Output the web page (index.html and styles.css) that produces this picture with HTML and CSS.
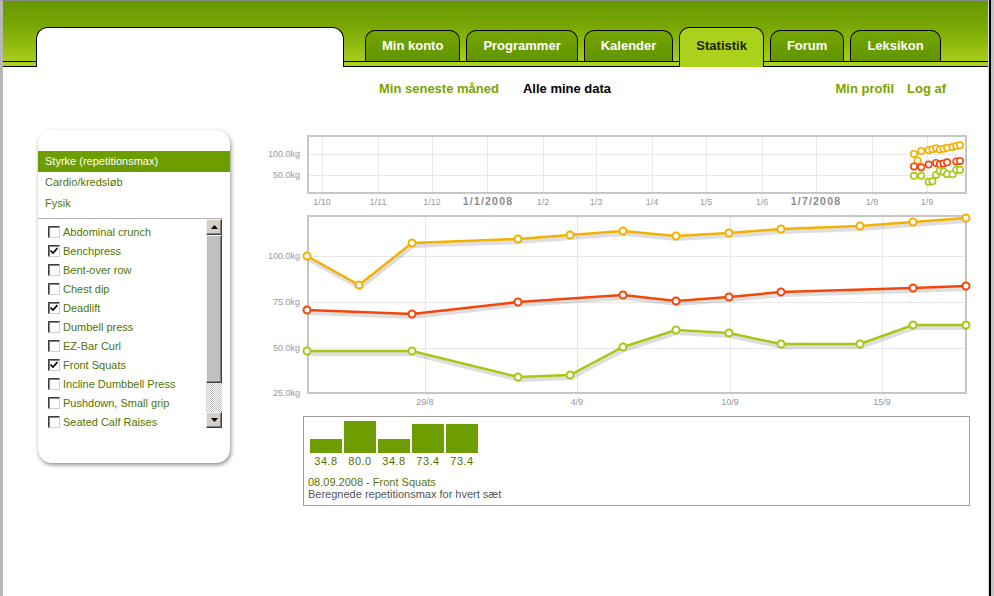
FILE: index.html
```html
<!DOCTYPE html>
<html lang="da">
<head>
  <meta charset="UTF-8" />
  <title>Statistik - Alle mine data</title>
  <link rel="stylesheet" href="styles.css">
</head>
<body>

<div class="frame">
  <div class="window">

    <div class="header">
      <div class="brand"></div>
      <ul class="tabs">
        <li>Min konto</li>
        <li>Programmer</li>
        <li>Kalender</li>
        <li class="active">Statistik</li>
        <li>Forum</li>
        <li>Leksikon</li>
      </ul>
    </div>

    <div class="subnav">
      <a href="#">Min seneste måned</a>
      <span class="current">Alle mine data</span>
      <div class="account">
        <a href="#">Min profil</a>
        <a href="#">Log af</a>
      </div>
    </div>

    <div class="main">

      <div class="sidebar">
        <ul class="cats">
          <li class="sel">Styrke (repetitionsmax)</li>
          <li>Cardio/kredsløb</li>
          <li>Fysik</li>
        </ul>
        <div class="picker">
          <ul class="exercises">
            <li><span class="cb"></span>Abdominal crunch</li>
            <li><span class="cb on"><svg width="8" height="8" viewBox="0 0 8 8"><path d="M0.5 3.5 L3 6 L7.5 1"/></svg></span>Benchpress</li>
            <li><span class="cb"></span>Bent-over row</li>
            <li><span class="cb"></span>Chest dip</li>
            <li><span class="cb on"><svg width="8" height="8" viewBox="0 0 8 8"><path d="M0.5 3.5 L3 6 L7.5 1"/></svg></span>Deadlift</li>
            <li><span class="cb"></span>Dumbell press</li>
            <li><span class="cb"></span>EZ-Bar Curl</li>
            <li><span class="cb on"><svg width="8" height="8" viewBox="0 0 8 8"><path d="M0.5 3.5 L3 6 L7.5 1"/></svg></span>Front Squats</li>
            <li><span class="cb"></span>Incline Dumbbell Press</li>
            <li><span class="cb"></span>Pushdown, Small grip</li>
            <li><span class="cb"></span>Seated Calf Raises</li>
          </ul>
          <div class="scrollbar">
            <div class="sb-btn"><svg width="7" height="4" viewBox="0 0 7 4"><path d="M3.5 0 L7 4 H0 Z"/></svg></div>
            <div class="sb-thumb"></div>
            <div class="sb-track"></div>
            <div class="sb-btn"><svg width="7" height="4" viewBox="0 0 7 4"><path d="M0 0 H7 L3.5 4 Z"/></svg></div>
          </div>
        </div>
      </div>

      <div class="charts">
        <svg class="plot" width="720" height="280" viewBox="255 130 720 280">
          <!-- oversigt -->
          <g class="grid">
            <line x1="309" y1="154.5" x2="965" y2="154.5"/>
            <line x1="309" y1="175.5" x2="965" y2="175.5"/>
            <line x1="322.5" y1="137" x2="322.5" y2="192"/>
            <line x1="378.5" y1="137" x2="378.5" y2="192"/>
            <line x1="432.5" y1="137" x2="432.5" y2="192"/>
            <line x1="487.5" y1="137" x2="487.5" y2="192"/>
            <line x1="543.5" y1="137" x2="543.5" y2="192"/>
            <line x1="596.5" y1="137" x2="596.5" y2="192"/>
            <line x1="652.5" y1="137" x2="652.5" y2="192"/>
            <line x1="706.5" y1="137" x2="706.5" y2="192"/>
            <line x1="762.5" y1="137" x2="762.5" y2="192"/>
            <line x1="816.5" y1="137" x2="816.5" y2="192"/>
            <line x1="872.5" y1="137" x2="872.5" y2="192"/>
            <line x1="927.5" y1="137" x2="927.5" y2="192"/>
          </g>
          <rect class="box" x="308" y="136" width="658" height="57"/>
          <text class="ylab" x="300" y="157">100.0kg</text>
          <text class="ylab" x="300" y="178">50.0kg</text>
          <g class="xlab">
            <text x="322" y="205">1/10</text>
            <text x="378" y="205">1/11</text>
            <text x="432" y="205">1/12</text>
            <text class="year" x="488" y="205">1/1/2008</text>
            <text x="543" y="205">1/2</text>
            <text x="596" y="205">1/3</text>
            <text x="652" y="205">1/4</text>
            <text x="706" y="205">1/5</text>
            <text x="762" y="205">1/6</text>
            <text class="year" x="816" y="205">1/7/2008</text>
            <text x="872" y="205">1/8</text>
            <text x="927" y="205">1/9</text>
          </g>
          <g class="mini yellow">
            <circle cx="914" cy="154" r="3.2"/><circle cx="917.6" cy="160.7" r="3.2"/><circle cx="921.3" cy="151" r="3.2"/>
            <circle cx="928.7" cy="150.2" r="3.2"/><circle cx="932.4" cy="149.2" r="3.2"/><circle cx="936.1" cy="148.2" r="3.2"/>
            <circle cx="939.8" cy="149.6" r="3.2"/><circle cx="943.5" cy="148.7" r="3.2"/><circle cx="947.1" cy="147.8" r="3.2"/>
            <circle cx="952.6" cy="146.9" r="3.2"/><circle cx="956.3" cy="146" r="3.2"/><circle cx="960" cy="145.3" r="3.2"/>
          </g>
          <g class="mini red">
            <circle cx="914" cy="166.4" r="3.2"/><circle cx="921.3" cy="167.3" r="3.2"/><circle cx="928.7" cy="164.6" r="3.2"/>
            <circle cx="936.1" cy="163" r="3.2"/><circle cx="939.8" cy="164.3" r="3.2"/><circle cx="943.5" cy="163.4" r="3.2"/>
            <circle cx="947.1" cy="162.3" r="3.2"/><circle cx="956.3" cy="161.4" r="3.2"/><circle cx="960" cy="160.9" r="3.2"/>
          </g>
          <g class="mini green">
            <circle cx="914" cy="175.8" r="3.2"/><circle cx="921.3" cy="175.8" r="3.2"/><circle cx="928.7" cy="181.8" r="3.2"/>
            <circle cx="932.4" cy="181.3" r="3.2"/><circle cx="936.1" cy="174.9" r="3.2"/><circle cx="939.8" cy="171" r="3.2"/>
            <circle cx="943.5" cy="171.7" r="3.2"/><circle cx="947.1" cy="174.2" r="3.2"/><circle cx="952.6" cy="174.2" r="3.2"/>
            <circle cx="956.3" cy="169.9" r="3.2"/><circle cx="960" cy="169.9" r="3.2"/>
          </g>

          <!-- detalje -->
          <g class="grid">
            <line x1="309" y1="256.5" x2="965" y2="256.5"/>
            <line x1="309" y1="302.5" x2="965" y2="302.5"/>
            <line x1="309" y1="348.5" x2="965" y2="348.5"/>
            <line x1="425.5" y1="217" x2="425.5" y2="392"/>
            <line x1="577.5" y1="217" x2="577.5" y2="392"/>
            <line x1="730.5" y1="217" x2="730.5" y2="392"/>
            <line x1="882.5" y1="217" x2="882.5" y2="392"/>
          </g>
          <rect class="box" x="308" y="216" width="658" height="177"/>
          <text class="ylab" x="300" y="259">100.0kg</text>
          <text class="ylab" x="300" y="305">75.0kg</text>
          <text class="ylab" x="300" y="351">50.0kg</text>
          <text class="ylab" x="300" y="396">25.0kg</text>
          <g class="xlab">
            <text x="425" y="405">29/8</text>
            <text x="577" y="405">4/9</text>
            <text x="730" y="405">10/9</text>
            <text x="882" y="405">15/9</text>
          </g>

          <g class="series yellow">
            <polyline class="shadow" transform="translate(1,3)" points="307,256 359,285 412,243 518,239 570,235 623,231 676,236 729,233 781,229 860,226 913,222 966,218"/>
            <polyline class="line" points="307,256 359,285 412,243 518,239 570,235 623,231 676,236 729,233 781,229 860,226 913,222 966,218"/>
            <circle cx="307" cy="256" r="3.5"/><circle cx="359" cy="285" r="3.5"/><circle cx="412" cy="243" r="3.5"/>
            <circle cx="518" cy="239" r="3.5"/><circle cx="570" cy="235" r="3.5"/><circle cx="623" cy="231" r="3.5"/>
            <circle cx="676" cy="236" r="3.5"/><circle cx="729" cy="233" r="3.5"/><circle cx="781" cy="229" r="3.5"/>
            <circle cx="860" cy="226" r="3.5"/><circle cx="913" cy="222" r="3.5"/><circle cx="966" cy="218" r="3.5"/>
          </g>
          <g class="series red">
            <polyline class="shadow" transform="translate(1,3)" points="307,310 412,314 518,302 623,295 676,301 729,297 781,292 913,288 966,286"/>
            <polyline class="line" points="307,310 412,314 518,302 623,295 676,301 729,297 781,292 913,288 966,286"/>
            <circle cx="307" cy="310" r="3.5"/><circle cx="412" cy="314" r="3.5"/><circle cx="518" cy="302" r="3.5"/>
            <circle cx="623" cy="295" r="3.5"/><circle cx="676" cy="301" r="3.5"/><circle cx="729" cy="297" r="3.5"/>
            <circle cx="781" cy="292" r="3.5"/><circle cx="913" cy="288" r="3.5"/><circle cx="966" cy="286" r="3.5"/>
          </g>
          <g class="series green">
            <polyline class="shadow" transform="translate(1,3)" points="307,351 412,351 518,377 570,375 623,347 676,330 729,333 781,344 860,344 913,325 966,325"/>
            <polyline class="line" points="307,351 412,351 518,377 570,375 623,347 676,330 729,333 781,344 860,344 913,325 966,325"/>
            <circle cx="307" cy="351" r="3.5"/><circle cx="412" cy="351" r="3.5"/><circle cx="518" cy="377" r="3.5"/>
            <circle cx="570" cy="375" r="3.5"/><circle cx="623" cy="347" r="3.5"/><circle cx="676" cy="330" r="3.5"/>
            <circle cx="729" cy="333" r="3.5"/><circle cx="781" cy="344" r="3.5"/><circle cx="860" cy="344" r="3.5"/>
            <circle cx="913" cy="325" r="3.5"/><circle cx="966" cy="325" r="3.5"/>
          </g>
        </svg>

        <div class="detail">
          <div class="bars">
            <div class="col"><div class="bar" style="height:14px"></div><div class="val">34.8</div></div>
            <div class="col"><div class="bar" style="height:32px"></div><div class="val">80.0</div></div>
            <div class="col"><div class="bar" style="height:14px"></div><div class="val">34.8</div></div>
            <div class="col"><div class="bar" style="height:29px"></div><div class="val">73.4</div></div>
            <div class="col"><div class="bar" style="height:29px"></div><div class="val">73.4</div></div>
          </div>
          <div class="caption">
            <div class="when">08.09.2008 - Front Squats</div>
            <div class="note">Beregnede repetitionsmax for hvert sæt</div>
          </div>
        </div>
      </div>

    </div>
  </div>
  <div class="edge"></div>
</div>

</body>
</html>
```

FILE: styles.css
```css
* {
  box-sizing: border-box;
}
body {
  margin: 0;
  background: #c4c4c4;
  font-family: "Liberation Sans", Arial, sans-serif;
}
.frame {
  display: flex;
  height: 596px;
  overflow: hidden;
}
.window {
  width: 989px;
  background: #fff;
  border-left: 3px solid #b8b8b8;
  border-top: 1px solid #8a8a8a;
  border-right: 1px solid #d6d6d6;
}
.edge {
  width: 2px;
  background: #000;
}

/* header */
.header {
  height: 66px;
  display: flex;
  align-items: flex-end;
  padding-left: 33px;
  background:
    linear-gradient(#000, #000) 0 60px / 100% 1px no-repeat,
    linear-gradient(#000, #000) 0 65px / 100% 1px no-repeat,
    linear-gradient(#acd11c, #acd11c) 0 61px / 100% 4px no-repeat,
    linear-gradient(#679800, #7aa804 40%, #b0d41e);
}
.brand {
  width: 308px;
  height: 40px;
  background: #fff;
  border: 1px solid #000;
  border-bottom: 0;
  border-radius: 12px 12px 0 0;
}
.tabs {
  display: flex;
  align-items: flex-end;
  gap: 6px;
  margin: 0 0 0 21px;
  padding: 0;
  list-style: none;
}
.tabs li {
  height: 31px;
  margin-bottom: 6px;
  padding: 0 16px;
  line-height: 29px;
  border: 1px solid #000;
  border-bottom: 0;
  border-radius: 10px 10px 0 0;
  background: linear-gradient(#74a500, #629500);
  color: #fff;
  font-size: 13px;
  font-weight: bold;
}
.tabs li.active {
  height: 40px;
  margin-bottom: 0;
  padding-top: 3px;
  background: #acd11c;
  color: #1c2400;
}

/* sub navigation */
.subnav {
  display: flex;
  gap: 24px;
  padding: 14px 42px 0 376px;
  font-size: 13px;
  font-weight: bold;
  line-height: 16px;
}
.subnav a {
  color: #7ba300;
  text-decoration: none;
}
.subnav .current {
  color: #000;
}
.account {
  display: flex;
  gap: 13px;
  margin-left: auto;
}

/* main */
.main {
  display: flex;
  gap: 25px;
  padding: 33px 0 0 35px;
}
.sidebar {
  width: 192px;
  height: 333px;
  padding-top: 21px;
  background: #fff;
  border-radius: 14px;
  box-shadow: 1px 2px 4px rgba(0,0,0,0.45);
  font-size: 11px;
}
.cats {
  list-style: none;
  margin: 0;
  padding: 0;
}
.cats li {
  height: 21px;
  line-height: 21px;
  padding-left: 7px;
  color: #557300;
}
.cats li.sel {
  background: #6e9d00;
  color: #fff;
}
.picker {
  display: flex;
  margin: 4px 8px 0 0;
  border-top: 1px solid #b4b4b4;
}
.exercises {
  flex: 1;
  list-style: none;
  margin: 0;
  padding: 3px 0 0 10px;
}
.exercises li {
  display: flex;
  align-items: center;
  gap: 3px;
  height: 19px;
  color: #4f7600;
}
.cb {
  width: 12px;
  height: 12px;
  display: flex;
  align-items: center;
  justify-content: center;
  background: #fff;
  border: 1px solid;
  border-color: #404040 #d4d0c8 #d4d0c8 #404040;
  box-shadow: inset 1px 1px #808080;
}
.cb svg {
  fill: none;
  stroke: #000;
  stroke-width: 1.6;
}
.scrollbar {
  width: 16px;
  display: flex;
  flex-direction: column;
}
.sb-btn,
.sb-thumb {
  border: 1px solid;
  border-color: #f4f4f4 #404040 #404040 #f4f4f4;
  box-shadow: inset -1px -1px #808080;
}
.sb-btn {
  height: 16px;
  display: flex;
  align-items: center;
  justify-content: center;
  background: #d4d0c8;
}
.sb-btn svg {
  fill: #000;
}
.sb-thumb {
  height: 148px;
  background: #c0c0c0;
}
.sb-track {
  height: 29px;
  background: repeating-conic-gradient(#c0c0c0 0 25%, #fff 0 50%) 0 0 / 2px 2px;
}

/* charts */
.charts {
  width: 720px;
}
.plot {
  display: block;
}
.grid line {
  stroke: #e8e8e8;
  stroke-width: 1;
}
.box {
  fill: none;
  stroke: #c6c6c6;
  stroke-width: 2;
}
.ylab {
  font-size: 9px;
  fill: #999;
  text-anchor: end;
}
.xlab text {
  font-size: 9px;
  fill: #999;
  text-anchor: middle;
}
.xlab .year {
  font-size: 10.5px;
  font-weight: bold;
  fill: #8a8a8a;
  letter-spacing: 1.2px;
}
.series .line {
  fill: none;
  stroke-width: 2.5;
}
.series .shadow {
  fill: none;
  stroke: #000;
  stroke-opacity: 0.13;
  stroke-width: 4;
}
.series circle {
  fill: #fff;
  stroke-width: 2;
}
.mini circle {
  fill: #fff;
  stroke-width: 1.6;
}
.yellow {
  stroke: #f2b000;
}
.red {
  stroke: #f4460a;
}
.green {
  stroke: #a6c814;
}

/* detail box */
.detail {
  width: 667px;
  margin: 6px 0 0 48px;
  padding: 4px 6px 5px 4px;
  border: 1px solid #9c9c9c;
  font-size: 11px;
}
.bars {
  display: flex;
  align-items: flex-end;
  gap: 2px;
  height: 47px;
  margin-left: 2px;
}
.col {
  width: 32px;
  text-align: center;
}
.bar {
  background: #6e9d00;
}
.val {
  margin-top: 1px;
  line-height: 14px;
  color: #586c00;
  letter-spacing: 0.5px;
}
.caption {
  margin-top: 8px;
  line-height: 12px;
}
.when {
  color: #5b7300;
}
.note {
  color: #555;
}
```
